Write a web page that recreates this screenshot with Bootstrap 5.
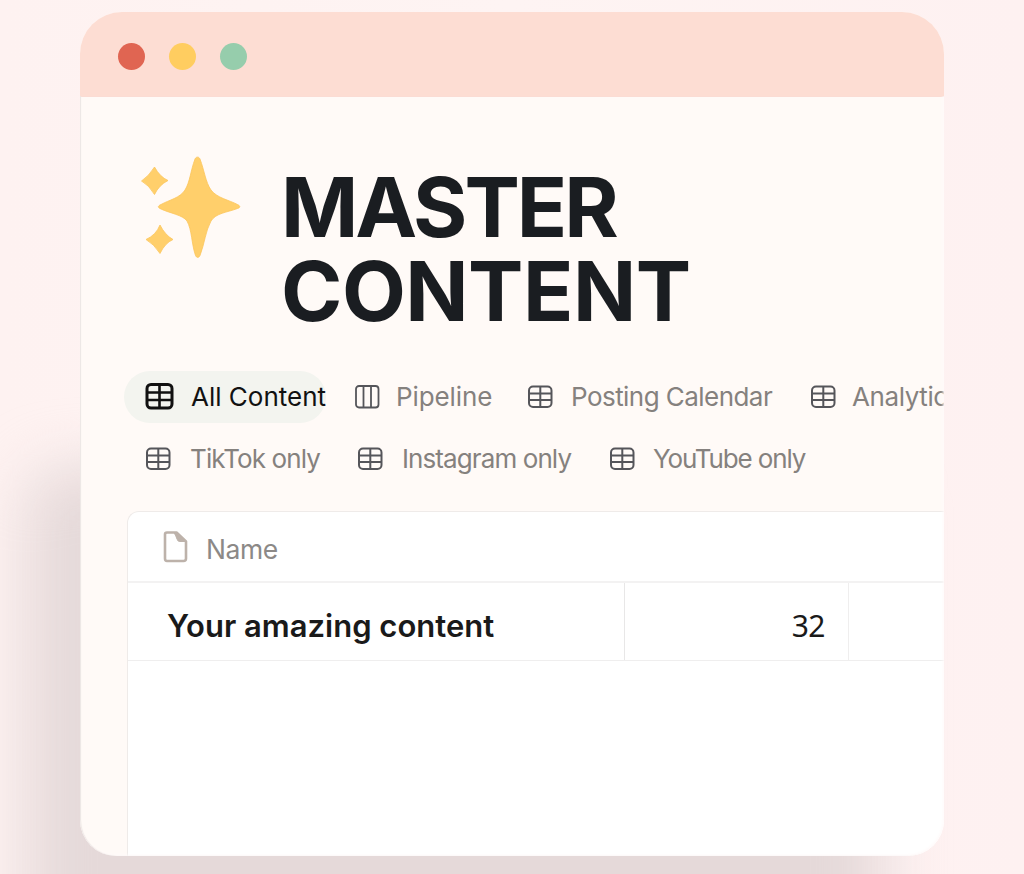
<!DOCTYPE html>
<html lang="en">
<head>
  <meta charset="UTF-8" />
  <meta name="viewport" content="width=device-width, initial-scale=1.0"/>
  <title>Master Content</title>
  <link href="https://cdn.jsdelivr.net/npm/bootstrap@5.3.0/dist/css/bootstrap.min.css" rel="stylesheet">
  <style>
    .backdrop {
      height: 874px;
      padding: 12px 80px 18px;
      background: linear-gradient(90deg, #fef2f1, #fef4f3 50%, #fef1f1);
      font-family: Inter, "Liberation Sans", sans-serif;
    }
    .stage {
      height: 844px;
    }
    /* soft shadow falling to the lower left */
    .stage::before {
      content: "";
      position: absolute;
      left: -54px;
      top: 456px;
      width: 856px;
      height: 490px;
      border-radius: 40px;
      background: #e5d9d9;
      filter: blur(30px);
    }
    .app-window {
      height: 844px;
      border-radius: 42px 42px 36px 36px;
      background: #fffaf7;
    }
    .app-window::after {
      content: "";
      position: absolute;
      inset: 84px 0 0 0;
      border-radius: 0 0 36px 36px;
      box-shadow: inset 1px 0 1px #ece6e4, inset -1px -1px 3px #fffafa;
      pointer-events: none;
    }
    .title-bar {
      height: 85px;
      padding: 4px 0 0 38px;
      gap: 23px;
      background: #fdddd3;
      border-bottom: 1px solid #fdd6cb;
    }
    .dot {
      width: 27px;
      height: 27px;
    }
    .dot + .dot { margin-left: 1px; }
    .dot-red { background: #e06552; }
    .dot-yellow { background: #ffcd60; }
    .dot-green { background: #96cdac; }

    .page-head {
      height: 274px;
      padding: 58px 0 0 60px;
      gap: 39px;
    }
    .page-title {
      margin: 10px 0 0;
      font-size: 83px;
      line-height: 84px;
      font-weight: 700;
      color: #1a1d21;
    }
    .t-master { letter-spacing: -3px; }
    .t-content { letter-spacing: -.5px; }

    .views-row {
      height: 52px;
      padding-left: 44px;
    }
    .views-row + .views-row { margin-top: 10px; }
    .view-tab {
      flex: none;
      height: 52px;
      font-size: 26px;
      color: #85817e;
    }
    .view-tab svg { color: #55555a; flex: none; }
    .view-tab span { margin-top: -2px; }
    .view-tab.current {
      width: 202px;
      padding-left: 21px;
      gap: 17px;
      border-radius: 26px;
      background: #f3f4ef;
      color: #111;
    }
    .view-tab.current svg { color: #111; }
    .v-pipeline { width: 173px; margin-left: 28px; gap: 16px; letter-spacing: -.1px; }
    .v-calendar { width: 283px; gap: 18px; letter-spacing: -.55px; }
    .v-analytics { gap: 16px; letter-spacing: -.4px; }
    .v-tiktok { width: 212px; margin-left: 21px; gap: 19px; letter-spacing: -.9px; }
    .v-instagram { width: 252px; gap: 19px; letter-spacing: -.9px; }
    .v-youtube { gap: 18px; letter-spacing: -1.15px; }

    .content-table {
      height: 346px;
      margin: 26px 0 0 47px;
      border: solid #efebe9;
      border-width: 1px 0 0 1px;
      border-top-left-radius: 12px;
      background: #fff;
    }
    .head-row {
      height: 71px;
      padding: 0 0 0 35px;
      gap: 18px;
      font-size: 26.5px;
      letter-spacing: -.45px;
      color: #8c8987;
      border-bottom: 2px solid #f3f2f2;
    }
    .head-row span { margin-top: 6px; }
    .body-row {
      height: 78px;
      border-bottom: 1px solid #efeeee;
    }
    .cell-name {
      width: 497px;
      padding: 9px 0 0 39px;
      font-size: 31px;
      font-weight: 600;
      color: #1a1a1a;
      border-right: 1px solid #e8e7e7;
    }
    .cell-count {
      width: 224px;
      padding: 7px 23px 0 0;
      font: 30px "Noto Sans", sans-serif;
      letter-spacing: -.5px;
      color: #1a1a1a;
      border-right: 1px solid #efeeee;
    }
  </style>
</head>
<body>
  <svg class="d-none">
    <symbol id="icon-table" viewBox="0 0 26 24">
      <g fill="none" stroke="currentColor" stroke-width="2">
        <rect x="2" y="1.500" width="22.500" height="20.500" rx="4"/>
        <path d="M2 8.500H24.500M2 15H24.500M13.300 1.500V22"/>
      </g>
    </symbol>
    <symbol id="icon-board" viewBox="0 0 26 24">
      <g fill="none" stroke="currentColor" stroke-width="1.800">
        <rect x="2" y="1" width="22.500" height="21.500" rx="3"/>
        <path d="M9.500 1V22.500M17 1V22.500"/>
      </g>
    </symbol>
  </svg>

  <main class="backdrop overflow-hidden">
    <div class="stage position-relative">
      <div class="app-window position-relative overflow-hidden">
        <div class="title-bar d-flex align-items-center">
          <span class="dot dot-red rounded-circle"></span>
          <span class="dot dot-yellow rounded-circle"></span>
          <span class="dot dot-green rounded-circle"></span>
        </div>

        <header class="page-head d-flex align-items-start">
          <svg width="102" height="106" viewBox="0 0 102 106" fill="#ffcf6b" stroke="#fbc55c" stroke-width=".8">
            <path d="M55 4C56 1.500 59 1.500 60 4C64.500 16 65.500 27 71 35C77 43 89 45 97.500 49.500C100.500 51 100.500 52.500 97.500 53.500C87 57.500 76 58 71 66C65.500 76 64.500 89 60 100.500C59 103 56.500 103 55.500 100.500C51.500 89 52 75 47 66C43 60 29 58 21 54C17.500 52.500 17.500 51 21 49.500C29 45 40 43 45 35C50 27 50.500 16 55 4Z"/>
            <path d="M14.500 12Q20 22 28 25.500Q19 30 14.500 39.500Q9 30 1.500 26Q9 21 14.500 12Z"/>
            <path d="M20 70Q25 80 33 84.500Q25 88 20 98.500Q14 89 6 84.500Q16 80 20 70Z"/>
          </svg>
          <h1 class="page-title text-nowrap">
            <span class="t-master d-block">MASTER</span>
            <span class="t-content d-block">CONTENT</span>
          </h1>
        </header>

        <nav>
          <div class="views-row d-flex text-nowrap">
            <div class="view-tab current d-flex align-items-center">
              <svg width="29" height="28" viewBox="0 0 29 28" fill="none" stroke="currentColor" stroke-width="3">
                <rect x="2" y="1.500" width="25" height="23.500" rx="4"/>
                <path stroke-width="2.600" d="M2 9.500H27M2 17H27M14.500 1.500V25"/>
              </svg>
              <span>All Content</span>
            </div>
            <div class="view-tab v-pipeline d-flex align-items-center">
              <svg width="26" height="24"><use href="#icon-board"/></svg>
              <span>Pipeline</span>
            </div>
            <div class="view-tab v-calendar d-flex align-items-center">
              <svg width="26" height="24"><use href="#icon-table"/></svg>
              <span>Posting Calendar</span>
            </div>
            <div class="view-tab v-analytics d-flex align-items-center">
              <svg width="26" height="24"><use href="#icon-table"/></svg>
              <span>Analytics</span>
            </div>
          </div>
          <div class="views-row d-flex text-nowrap">
            <div class="view-tab v-tiktok d-flex align-items-center">
              <svg width="26" height="24"><use href="#icon-table"/></svg>
              <span>TikTok only</span>
            </div>
            <div class="view-tab v-instagram d-flex align-items-center">
              <svg width="26" height="24"><use href="#icon-table"/></svg>
              <span>Instagram only</span>
            </div>
            <div class="view-tab v-youtube d-flex align-items-center">
              <svg width="26" height="24"><use href="#icon-table"/></svg>
              <span>YouTube only</span>
            </div>
          </div>
        </nav>

        <div class="content-table">
          <div class="head-row d-flex align-items-center">
            <svg width="25" height="32" viewBox="0 0 25 32" fill="none" stroke="#bdb2aa" stroke-width="2.600" stroke-linejoin="round">
              <path d="M4 1.500H13.500L23 10.500V27.500Q23 30 20.500 30H4Q2 30 2 27.500V3.500Q2 1.500 4 1.500Z"/>
              <path fill="#bdb2aa" stroke-width="1" d="M11 1.500H14L23 10.500H17Q14.500 10.500 14 8Q13 5 11 1.500Z"/>
            </svg>
            <span>Name</span>
          </div>
          <div class="body-row d-flex">
            <div class="cell-name d-flex align-items-center text-nowrap">Your amazing content</div>
            <div class="cell-count d-flex align-items-center justify-content-end">32</div>
          </div>
        </div>
      </div>
    </div>
  </main>

  <script src="https://cdn.jsdelivr.net/npm/bootstrap@5.3.0/dist/js/bootstrap.bundle.min.js"></script>
</body>
</html>
